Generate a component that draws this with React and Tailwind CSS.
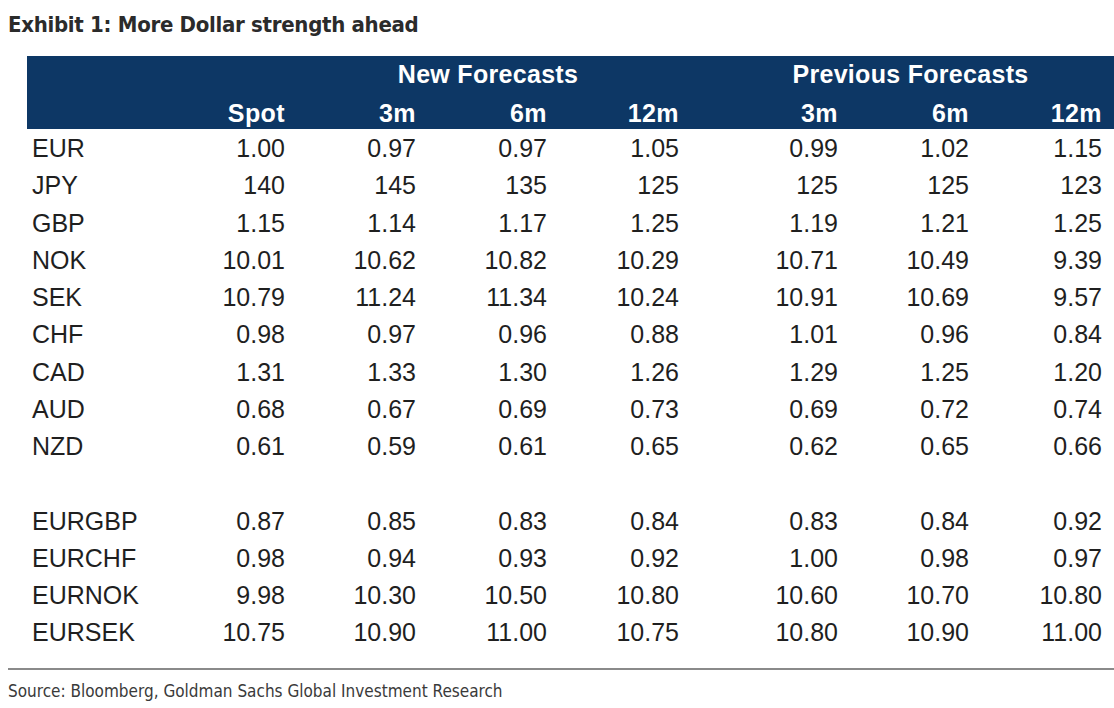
import React from "react";

const rows = [
  ["EUR", "1.00", "0.97", "0.97", "1.05", "0.99", "1.02", "1.15"],
  ["JPY", "140", "145", "135", "125", "125", "125", "123"],
  ["GBP", "1.15", "1.14", "1.17", "1.25", "1.19", "1.21", "1.25"],
  ["NOK", "10.01", "10.62", "10.82", "10.29", "10.71", "10.49", "9.39"],
  ["SEK", "10.79", "11.24", "11.34", "10.24", "10.91", "10.69", "9.57"],
  ["CHF", "0.98", "0.97", "0.96", "0.88", "1.01", "0.96", "0.84"],
  ["CAD", "1.31", "1.33", "1.30", "1.26", "1.29", "1.25", "1.20"],
  ["AUD", "0.68", "0.67", "0.69", "0.73", "0.69", "0.72", "0.74"],
  ["NZD", "0.61", "0.59", "0.61", "0.65", "0.62", "0.65", "0.66"],
  null,
  ["EURGBP", "0.87", "0.85", "0.83", "0.84", "0.83", "0.84", "0.92"],
  ["EURCHF", "0.98", "0.94", "0.93", "0.92", "1.00", "0.98", "0.97"],
  ["EURNOK", "9.98", "10.30", "10.50", "10.80", "10.60", "10.70", "10.80"],
  ["EURSEK", "10.75", "10.90", "11.00", "10.75", "10.80", "10.90", "11.00"],
];

const grid = "grid grid-cols-[133px_125px_131px_131px_132px_159px_131px_133px]";
const arial = { fontFamily: '"Liberation Sans", Arial, sans-serif' };
const cond = { fontFamily: '"Liberation Sans Narrow", "DejaVu Sans Condensed", "Roboto Condensed", "Liberation Sans", sans-serif', fontStretch: "condensed" };

export default function App() {
  return (
    <div className="w-[1114px] h-[708px] bg-white overflow-hidden">
      <div className="pl-[8px] pt-[10px] h-[52px] text-[22px] font-bold leading-[30px] text-[#2b2b2b] tracking-[-0.3px]" style={cond}>
        Exhibit 1: More Dollar strength ahead
      </div>
      <div className="ml-[27px] mt-[4px]" style={arial}>
        <div className="bg-[#0d3765] text-white font-bold text-[25px] h-[73px]">
          <div className={`${grid} h-[36px] items-center`}>
            <div className="col-start-3 col-span-3 text-center pl-[12px] tracking-[0.3px]">New Forecasts</div>
            <div className="col-span-3 text-center pl-[40px] tracking-[0.3px]">Previous Forecasts</div>
          </div>
          <div className={`${grid} h-[37px] pt-[3px] items-center`}>
            <div />
            {["Spot", "3m", "6m", "12m", "3m", "6m", "12m"].map((h, i) => (
              <div key={i} className="text-right tracking-[0.4px]">{h}</div>
            ))}
          </div>
        </div>
        <div className="pt-[1px] text-[25px] text-[#1f1f1f]">
          {rows.map((r, i) =>
            r ? (
              <div key={i} className={`${grid} h-[37.25px] items-center`}>
                <div className="pl-[5px]">{r[0]}</div>
                {r.slice(1).map((v, j) => (
                  <div key={j} className="text-right">{v}</div>
                ))}
              </div>
            ) : (
              <div key={i} className="h-[37.25px]" />
            )
          )}
        </div>
      </div>
      <div className="ml-[8px] mt-[16px] h-[2px] bg-[#8a8a8a]" />
      <div className="pl-[8px] pt-[10px] text-[17px] leading-[22px] text-[#3a3a3a]" style={cond}>
        Source: Bloomberg, Goldman Sachs Global Investment Research
      </div>
    </div>
  );
}
